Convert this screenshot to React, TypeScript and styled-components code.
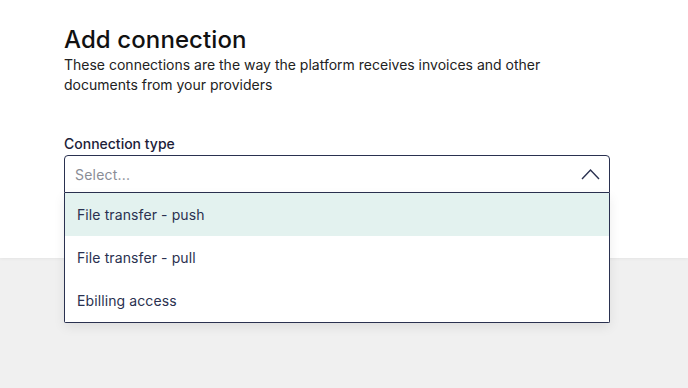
import React, { useState } from 'react'
import styled, { createGlobalStyle } from 'styled-components'

const GlobalStyle = createGlobalStyle`
  html, body {
    margin: 0;
    padding: 0;
    background: #f0f0f0;
    font-family: Inter, 'Noto Sans', sans-serif;
    -webkit-font-smoothing: antialiased;
  }
`

const OPTIONS = ['File transfer - push', 'File transfer - pull', 'Ebilling access']

const Page = styled.div`
  width: 688px;
  height: 388px;
  overflow: hidden;
  background: #f0f0f0;
`

const Panel = styled.section`
  height: 258px;
  box-sizing: border-box;
  padding: 26px 78px 0 64px;
  background: #ffffff;
  box-shadow: 0 1px 3px rgba(0, 0, 0, 0.05);
`

const Title = styled.h1`
  margin: 0;
  font-size: 24px;
  line-height: 28px;
  font-weight: 500;
  letter-spacing: 0.1px;
  color: #111111;
`

const Subtitle = styled.p`
  margin: 1px 0 0;
  font-size: 14px;
  line-height: 20px;
  letter-spacing: 0;
  color: #222222;
`

const Field = styled.div`
  position: relative;
  margin-top: 40px;
`

const Label = styled.label`
  display: block;
  font-size: 14px;
  line-height: 18px;
  font-weight: 500;
  letter-spacing: 0;
  color: #1c2138;
  margin-bottom: 2px;
`

const Trigger = styled.button<{ open: boolean }>`
  display: flex;
  align-items: center;
  justify-content: space-between;
  width: 100%;
  height: 38px;
  box-sizing: border-box;
  padding: 0 9px 0 10px;
  background: #ffffff;
  border: 1px solid #2a3150;
  border-radius: ${({ open }) => (open ? '4px 4px 0 0' : '4px')};
  font-family: inherit;
  font-size: 14px;
  letter-spacing: 0.2px;
  color: #8a8d96;
  cursor: pointer;
`

const Menu = styled.ul`
  position: absolute;
  left: 0;
  right: 0;
  top: 58px;
  margin: 0;
  padding: 0;
  list-style: none;
  background: #ffffff;
  border: 1px solid #2a3150;
  border-top: none;
  border-radius: 0 0 2px 2px;
  box-shadow: 0 4px 12px rgba(0, 0, 0, 0.08);
`

const Option = styled.li<{ active: boolean }>`
  height: 43px;
  display: flex;
  align-items: center;
  padding-left: 12px;
  font-size: 14px;
  letter-spacing: 0.1px;
  color: #2a3150;
  background: ${({ active }) => (active ? '#e3f2ef' : '#ffffff')};
  cursor: pointer;
`

function Chevron({ up }: { up: boolean }) {
  return (
    <svg width="19" height="12" viewBox="0 0 19 12" fill="none">
      <path
        d={up ? 'M1 11L9.5 2L18 11' : 'M1 1L9.5 10L18 1'}
        stroke="#2a3150"
        strokeWidth="1.4"
      />
    </svg>
  )
}

export default function App() {
  const [open, setOpen] = useState(true)
  const [active, setActive] = useState(0)

  return (
    <Page>
      <GlobalStyle />
      <Panel>
        <Title>Add connection</Title>
        <Subtitle>
          These connections are the way the platform receives invoices and other
          documents from your providers
        </Subtitle>
        <Field>
          <Label>Connection type</Label>
          <Trigger open={open} onClick={() => setOpen(!open)}>
            Select...
            <Chevron up={open} />
          </Trigger>
          {open && (
            <Menu>
              {OPTIONS.map((option, i) => (
                <Option
                  key={option}
                  active={i === active}
                  onMouseEnter={() => setActive(i)}
                >
                  {option}
                </Option>
              ))}
            </Menu>
          )}
        </Field>
      </Panel>
    </Page>
  )
}
